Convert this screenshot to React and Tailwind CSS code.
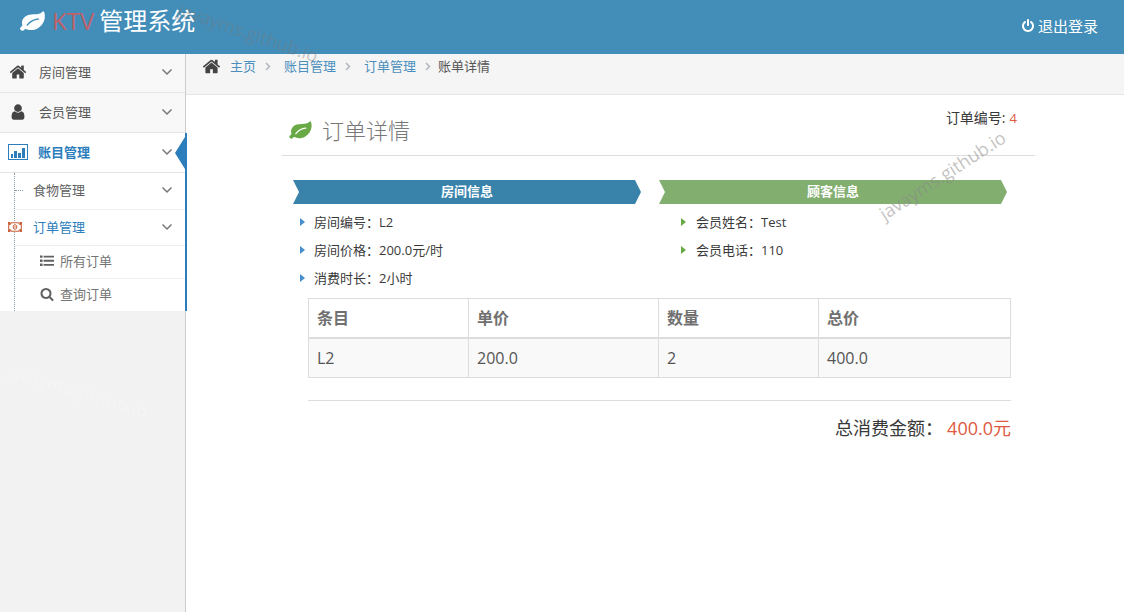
import React from 'react';

const PATHS = {
  home: 'M1472 992v480q0 26-19 45t-45 19h-384v-384h-256v384h-384q-26 0-45-19t-19-45v-480q0-1 .5-3t.5-3l575-474 575 474q1 2 1 6zm223-69l-62 74q-8 9-21 11h-3q-13 0-21-7l-692-577-692 577q-12 8-24 7-13-2-21-11l-62-74q-8-10-7-23.5t11-21.5l719-599q32-26 76-26t76 26l244 204v-195q0-14 9-23t23-9h192q14 0 23 9t9 23v408l219 182q10 8 11 21.5t-7 23.5z',
  user: 'M1536 1399q0 109-62.5 187t-150.5 78h-854q-88 0-150.5-78t-62.5-187q0-85 8.5-160.5t31.5-152 58.5-131 94-89 134.5-34.5q131 128 313 128t313-128q76 0 134.5 34.5t94 89 58.5 131 31.5 152 8.5 160.5zm-256-887q0 159-112.5 271.5t-271.5 112.5-271.5-112.5-112.5-271.5 112.5-271.5 271.5-112.5 271.5 112.5 112.5 271.5z',
  search: 'M1216 832q0-185-131.5-316.5t-316.5-131.5-316.5 131.5-131.5 316.5 131.5 316.5 316.5 131.5 316.5-131.5 131.5-316.5zm512 832q0 52-38 90t-90 38q-54 0-90-38l-343-342q-179 124-399 124-143 0-273.5-55.5t-225-150-150-225-55.5-273.5 55.5-273.5 150-225 225-150 273.5-55.5 273.5 55.5 225 150 150 225 55.5 273.5q0 220-124 399l343 343q37 37 37 90z',
  power: 'M1664 896q0 156-61 298t-164 245-245 164-298 61-298-61-245-164-164-245-61-298q0-182 80.5-343t226.5-270q43-32 95.5-25t83.5 50q32 42 24.5 94.5t-49.5 84.5q-98 74-151.5 181t-53.5 228q0 104 40.5 198.5t109.5 163.5 163.5 109.5 198.5 40.5 198.5-40.5 163.5-109.5 109.5-163.5 40.5-198.5q0-121-53.5-228t-151.5-181q-42-32-49.5-84.5t24.5-94.5q31-43 84-50t95 25q146 109 226.5 270t80.5 343zm-640-768v640q0 52-38 90t-90 38-90-38-38-90v-640q0-52 38-90t90-38 90 38 38 90z',
  list: 'M0 192h330v300H0zM460 230h1332v230H460zM0 710h330v300H0zM460 750h1332v230H460zM0 1230h330v300H0zM460 1270h1332v230H460z',
};

const Icon = ({ name, className }) => (
  <svg viewBox="0 0 1792 1792" fill="currentColor" className={`shrink-0 ${className}`} aria-hidden="true">
    <path d={PATHS[name]} />
  </svg>
);

const Leaf = ({ className, vein }) => (
  <svg viewBox="0 0 25 20" className={`shrink-0 ${className}`} aria-hidden="true">
    <path
      d="M23.600.300c1 1 1.400 3.700 1.200 6.200-.4 4.500-3.200 8.600-7.300 10.900-2.500 1.400-5.500 2-8.400 1.500-1.400-.2-2.600-1-3.600-1-1.100 0-1.700 1.900-2.900 1.900C1.200 19.800 0 18.500 0 17.500c0-1.300 2.400-2.300 2.400-3.300 0-.6-.4-1.200-.4-2.400 0-3.600 2.700-6.700 6.300-7.800 3.400-1.100 8-.2 11.600-1.500 1.700-.6 2.500-2 3.700-2.200z"
      fill="currentColor"
    />
    <path d="M7.300 14c2.800-3.500 6-5.500 11-6" fill="none" stroke={vein} strokeWidth="1.400" strokeLinecap="round" />
  </svg>
);

const ChartIcon = () => (
  <svg viewBox="0 0 20 16" className="h-4 w-5 shrink-0" aria-hidden="true">
    <rect x="0.500" y="0.500" width="19" height="15" fill="none" stroke="currentColor" />
    <path d="M3 10h2v4H3zM6 7h3v7H6zM10 9h3v5h-3zM14 4h3v10h-3z" fill="currentColor" />
  </svg>
);

const MoneyIcon = ({ className }) => (
  <svg viewBox="0 0 14 10" className={className} aria-hidden="true">
    <rect width="14" height="10" fill="#fff" />
    <path d="M3 .700h8q0 1.800 2.300 1.800v5q-2.300 0-2.300 1.800H3q0-1.800-2.300-1.800v-5Q3 2.500 3 .700z" fill="none" stroke="#c86139" strokeWidth="1.100" />
    <path d="M0 0h2v2H0zM12 0h2v2h-2zM0 8h2v2H0zM12 8h2v2h-2z" fill="#c86139" />
    <ellipse cx="7" cy="5" rx="1.800" ry="2.300" fill="none" stroke="#c86139" />
    <path d="M7 4v2" stroke="#c86139" strokeWidth="0.800" />
  </svg>
);

const AngleDown = () => (
  <svg viewBox="0 0 12 8" className="ml-auto h-2 w-3 shrink-0 text-[#777]" aria-hidden="true">
    <path d="M1.500 1.500L6 6l4.500-4.500" fill="none" stroke="currentColor" strokeWidth="1.500" />
  </svg>
);

const AngleRight = ({ className }) => (
  <svg viewBox="0 0 6 10" className={`h-[10px] w-[6px] shrink-0 text-[#b2b6bf] ${className}`} aria-hidden="true">
    <path d="M1 2l3.500 3.500L1 9" fill="none" stroke="currentColor" strokeWidth="1.500" />
  </svg>
);

const Caret = ({ className }) => (
  <svg viewBox="0 0 5 8" className={`h-2 w-[5px] shrink-0 ${className}`} aria-hidden="true">
    <path d="M0 0l5 4-5 4z" fill="currentColor" />
  </svg>
);

const Watermark = ({ className }) => (
  <span className={`pointer-events-none absolute whitespace-nowrap select-none ${className}`} aria-hidden="true">
    javayms.github.io
  </span>
);

const roomInfo = ['房间编号：L2', '房间价格：200.0元/时', '消费时长：2小时'];
const customerInfo = ['会员姓名：Test', '会员电话：110'];
const columns = [
  { title: '条目', width: 'w-[160px]' },
  { title: '单价', width: 'w-[190px]' },
  { title: '数量', width: 'w-[160px]' },
  { title: '总价', width: '' },
];
const rows = [['L2', '200.0', '2', '400.0']];

const Sidebar = () => (
  <nav className="relative w-[186px] shrink-0 border-r border-[#ccc] bg-[#f2f2f2] text-[#585858]">
    <ul>
      <li className="border-b border-[#e5e5e5] bg-[#f8f8f8]">
        <a href="#rooms" className="flex h-[38px] items-center pr-3 pb-[2px] pl-[9px]">
          <Icon name="home" className="mr-3 size-[18px] text-[#444]" />
          房间管理
          <AngleDown />
        </a>
      </li>
      <li className="border-b border-[#e5e5e5] bg-[#f8f8f8]">
        <a href="#members" className="flex h-[39px] items-center pr-3 pb-[2px] pl-[9px]">
          <Icon name="user" className="mr-3 size-[18px] text-[#444]" />
          会员管理
          <AngleDown />
        </a>
      </li>
      <li className="relative bg-white">
        {/* 当前菜单标记 */}
        <span className="absolute top-0 -right-[2px] h-full w-[2px] bg-[#2b7dbc]" />
        <span className="absolute top-1 right-0 h-8 w-[10px] bg-[#2b7dbc] [clip-path:polygon(100%_0,100%_100%,0_50%)]" />
        <a href="#accounts" className="flex h-10 items-center border-b border-[#e5e5e5] pr-3 pb-[2px] pl-2 font-bold text-[#2b7dbc]">
          <span className="mr-[10px]"><ChartIcon /></span>
          账目管理
          <AngleDown />
        </a>
        <ul className="ml-[14px] border-l border-dotted border-[#889aa8] text-[#616161]">
          <li className="relative border-b border-[#eee]">
            <span className="absolute top-[17px] left-0 w-2 border-t border-dotted border-[#889aa8]" />
            <a href="#foods" className="flex h-9 items-center pr-3 pb-[2px] pl-[18px]">
              食物管理
              <AngleDown />
            </a>
          </li>
          <li className="relative">
            <MoneyIcon className="absolute top-3 -left-[7px] h-[10px] w-[14px]" />
            <a href="#orders" className="flex h-9 items-center border-b border-[#eee] pr-3 pb-[2px] pl-[18px] text-[#2b7dbc]">
              订单管理
              <AngleDown />
            </a>
            <ul className="text-[#757575]">
              <li className="border-b border-[#eee]">
                <a href="#all" className="flex h-8 items-center pb-[2px] pl-[25px]">
                  <Icon name="list" className="mr-[6px] size-[14px] text-[#616161]" />
                  所有订单
                </a>
              </li>
              <li>
                <a href="#query" className="flex h-8 items-center pb-[2px] pl-[25px]">
                  <Icon name="search" className="mr-[6px] size-[14px] text-[#616161]" />
                  查询订单
                </a>
              </li>
            </ul>
          </li>
        </ul>
      </li>
    </ul>
    <Watermark className="top-[322px] left-[4px] rotate-[17deg] text-lg text-[#f5f5f5]" />
  </nav>
);

const Breadcrumbs = () => (
  <div className="flex h-[41px] items-start border-b border-[#e5e5e5] bg-[#f5f5f5] pl-4">
    <div className="flex h-6 items-center text-[#4c8fbd]">
      <Icon name="home" className="mr-[9px] size-[19px] text-[#444]" />
      <a href="#home">主页</a>
      <AngleRight className="mr-[13px] ml-[9px]" />
      <a href="#accounts">账目管理</a>
      <AngleRight className="mr-[13px] ml-[9px]" />
      <a href="#orders">订单管理</a>
      <AngleRight className="mr-[7px] ml-[9px]" />
      <span className="text-[#555]">账单详情</span>
    </div>
  </div>
);

const App = () => {
  return (
    <div className="relative flex min-h-screen flex-col overflow-hidden bg-white font-['Open_Sans','Noto_Sans_CJK_SC',sans-serif] text-[13px] leading-5 text-[#393939]">
      <header className="flex h-[54px] items-center justify-between bg-[#438eb9] pr-[26px] pl-5 text-white">
        <a href="#home" className="flex items-center pb-3 text-2xl leading-8">
          <Leaf className="mr-[7px] h-5 w-[25px]" vein="#438eb9" />
          <span className="mr-[5px] text-[#c0616a]">KTV</span>
          管理系统
        </a>
        <button type="button" className="flex items-center gap-[3px] pb-[2px] text-[15px]">
          <Icon name="power" className="size-[14px]" />
          退出登录
        </button>
      </header>

      <div className="flex flex-1">
        <Sidebar />
        <main className="min-w-0 flex-1">
          <Breadcrumbs />

          <section className="pt-[10px] pr-[89px] pl-24">
            <div className="flex h-[51px] justify-between border-b border-[#ddd] pr-[18px] pl-[7px]">
              <h3 className="flex items-center text-[22px] leading-8 font-light text-[#777]">
                <Leaf className="mr-[10px] h-[18px] w-[23px] text-[#69aa46]" vein="#fff" />
                订单详情
              </h3>
              <div className="pt-[3px]">
                <span className="text-[14px]">订单编号:</span>
                <span className="ml-1 text-[#dd5a43]">4</span>
              </div>
            </div>

            <div className="mt-6 grid grid-cols-2 gap-[18px] pr-7 pl-[11px]">
              <div>
                <div className="h-6 bg-[#3983ab] text-center leading-[22px] font-bold text-white [clip-path:polygon(0_0,calc(100%-6px)_0,100%_50%,calc(100%-6px)_100%,0_100%,6px_50%)]">
                  房间信息
                </div>
                <ul className="mt-1 pl-[7px]">
                  {roomInfo.map((text) => (
                    <li key={text} className="flex h-7 items-center">
                      <Caret className="mr-[9px] text-[#478fca]" />
                      {text}
                    </li>
                  ))}
                </ul>
              </div>
              <div>
                <div className="h-6 bg-[#82af6f] text-center leading-[22px] font-bold text-white [clip-path:polygon(0_0,calc(100%-6px)_0,100%_50%,calc(100%-6px)_100%,0_100%,6px_50%)]">
                  顾客信息
                </div>
                <ul className="mt-1 pl-[22px]">
                  {customerInfo.map((text) => (
                    <li key={text} className="flex h-7 items-center">
                      <Caret className="mr-[10px] text-[#69aa46]" />
                      {text}
                    </li>
                  ))}
                </ul>
              </div>
            </div>

            <div className="mt-[6px] pr-6 pl-[26px]">
              <table className="w-full table-fixed border-collapse border border-[#ddd] text-left text-base text-[#555]">
                <thead>
                  <tr className="h-[39px] border-b-2 border-[#ddd] text-[#707070]">
                    {columns.map((col) => (
                      <th key={col.title} className={`border-r border-[#ddd] px-2 font-bold ${col.width}`}>{col.title}</th>
                    ))}
                  </tr>
                </thead>
                <tbody>
                  {rows.map((row) => (
                    <tr key={row[0]} className="h-10 bg-[#f9f9f9]">
                      {row.map((cell, i) => (
                        <td key={i} className="border-r border-[#ddd] px-2">{cell}</td>
                      ))}
                    </tr>
                  ))}
                </tbody>
              </table>
              <hr className="mt-[22px] border-[#ddd]" />
              <div className="mt-[13px] flex justify-end text-lg">
                <span className="mr-1">总消费金额：</span>
                <span className="text-[#dd5a43]">400.0元</span>
              </div>
            </div>
          </section>
        </main>
      </div>

      <Watermark className="top-[18px] left-[175px] rotate-[19deg] text-lg text-[#777]/40" />
      <Watermark className="top-[161px] right-[109px] -rotate-[33deg] text-lg text-[#888]/50" />
    </div>
  );
};

export default App;
